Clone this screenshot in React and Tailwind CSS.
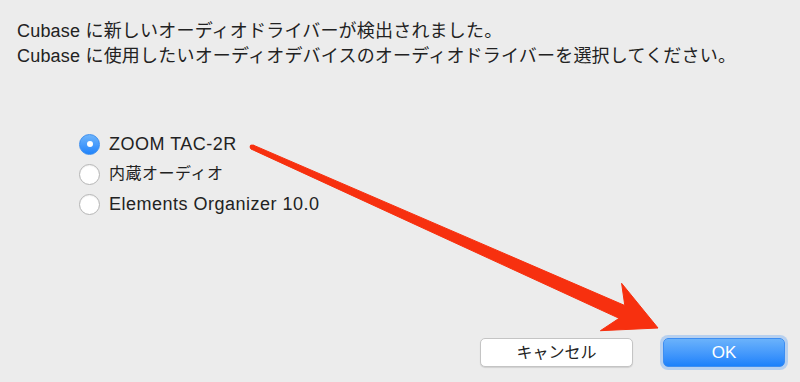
import React from 'react';

const options = [
  { label: 'ZOOM TAC-2R', checked: true },
  { label: '内蔵オーディオ', jp: true },
  { label: 'Elements Organizer 10.0' },
];

function Radio({ checked }) {
  if (checked) {
    return (
      <span className="w-[21px] h-[21px] rounded-full bg-gradient-to-b from-[#6db4fb] to-[#1d83fb] border border-[#3b8ef0] flex items-center justify-center shrink-0">
        <span className="w-[6px] h-[6px] rounded-full bg-white" />
      </span>
    );
  }
  return (
    <span className="w-[21px] h-[21px] rounded-full bg-white border border-[#b5b5b5] shadow-[inset_0_1px_1px_rgba(0,0,0,0.06)] shrink-0" />
  );
}

export default function App() {
  return (
    <div
      className="relative w-[800px] h-[382px] bg-[#ececec] flex flex-col text-[#222]"
      style={{ fontFamily: '"Liberation Sans", "Noto Sans CJK JP", sans-serif' }}
    >
      <div className="pl-[17px] pt-[19px] text-[18px] tracking-[0.2px]">
        <p className="h-[25px] flex items-center whitespace-nowrap">Cubase に新しいオーディオドライバーが検出されました。</p>
        <p className="h-[25px] flex items-center whitespace-nowrap">Cubase に使用したいオーディオデバイスのオーディオドライバーを選択してください。</p>
      </div>

      <div className="ml-[79px] mt-[60px] flex flex-col">
        {options.map((o) => (
          <label key={o.label} className="h-[30px] flex items-center gap-[9px]">
            <Radio checked={o.checked} />
            <span className={o.jp ? 'text-[16px] tracking-[0.5px]' : 'text-[18px] tracking-[0.5px]'}>{o.label}</span>
          </label>
        ))}
      </div>

      <div className="mt-auto flex justify-end gap-[30px] pr-[15px] pb-[15px]">
        <button className="w-[153px] h-[29px] rounded-[5px] bg-white border border-[#c4c4c4] shadow-[0_1px_1px_rgba(0,0,0,0.12)] text-[16px] text-[#222]">
          キャンセル
        </button>
        <button className="w-[122px] h-[29px] rounded-[5px] bg-gradient-to-b from-[#6ab2fb] to-[#1b81fb] border border-[#3d8ef2] shadow-[0_0_0_3px_rgba(120,175,245,0.45)] text-[17px] text-white">
          OK
        </button>
      </div>

      {/* annotation arrow */}
      <svg className="absolute inset-0 w-full h-full pointer-events-none" viewBox="0 0 800 382">
        <polygon
          points="253,145 624.8,305.5 621.6,283.3 658,328 600.4,330.7 619.1,318.3 251,149"
          fill="#f7300f"
          stroke="#f7300f"
          strokeWidth="1"
          strokeLinejoin="round"
        />
        <circle cx="252" cy="147" r="2.4" fill="#f7300f" />
      </svg>
    </div>
  );
}
